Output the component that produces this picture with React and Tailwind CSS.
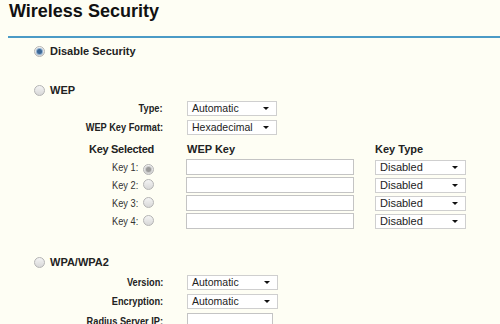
import React from "react";

function Radio({ checked, disabled }) {
  return (
    <span className="relative inline-flex w-[11px] h-[11px] rounded-full border border-[#b4b4b4] bg-gradient-to-b from-[#f4f4f4] to-[#d8d8d8] items-center justify-center shrink-0">
      {checked && (
        <span
          className={
            disabled
              ? "w-[5px] h-[5px] rounded-full bg-[#9a9a9a] ring-1 ring-[#c8c8c8]"
              : "w-[5px] h-[5px] rounded-full bg-[#3c6796] ring-1 ring-[#8fb0d0]"
          }
        />
      )}
    </span>
  );
}

function Select({ value, width = "w-[90px]", textSize = "text-[10.5px]" }) {
  return (
    <div
      className={`${width} h-[15px] border border-[#cfcfcf] bg-white flex items-center justify-between pl-[4px] pr-[7px] ${textSize} text-[#222] leading-none`}
    >
      <span>{value}</span>
      <span className="w-0 h-0 border-l-[3px] border-r-[3px] border-t-[3px] border-l-transparent border-r-transparent border-t-[#111]" />
    </div>
  );
}

function Input({ width }) {
  return <div className={`${width} h-[16px] border border-[#c4c4c4] bg-white`} />;
}

function LabelRow({ label, children, className = "" }) {
  return (
    <div className={`flex items-center ${className}`}>
      <div className="w-[163px] flex justify-end font-bold text-[11px] text-[#222] leading-none">
        <span className="inline-block whitespace-nowrap origin-right scale-x-[0.84]">{label}</span>
      </div>
      <div className="ml-[24px]">{children}</div>
    </div>
  );
}

export default function App() {
  return (
    <div
      className="w-[500px] h-[324px] overflow-hidden bg-[#fefef4] text-[#222]"
      style={{ fontFamily: "'Liberation Sans', Arial, sans-serif" }}
    >
      <div className="flex flex-col">
        <div className="pl-[9px] text-[18px] font-bold leading-[22px] text-[#111]">Wireless Security</div>
        <div className="ml-[8px] mt-[14px] h-[2px] bg-[#4b9bc6]" />

        <div className="flex items-center h-[14px] mt-[6px] pl-[34px]">
          <Radio checked />
          <span className="ml-[5px] text-[11px] font-bold leading-none">Disable Security</span>
        </div>

        <div className="flex items-center h-[14px] mt-[25px] pl-[34px]">
          <Radio />
          <span className="ml-[5px] text-[11px] font-bold leading-none">WEP</span>
        </div>

        <LabelRow label="Type:" className="mt-[4px]">
          <Select value="Automatic" />
        </LabelRow>
        <LabelRow label="WEP Key Format:" className="mt-[4px]">
          <Select value="Hexadecimal" />
        </LabelRow>

        <div className="flex items-center h-[14px] mt-[7px] text-[11px] font-bold leading-none">
          <div className="w-[163px] pl-[89px] tracking-[-0.3px]">Key Selected</div>
          <div className="ml-[24px] w-[188px]">WEP Key</div>
          <div>Key Type</div>
        </div>

        <div className="flex flex-col gap-[2px] mt-[3px]">
          {[1, 2, 3, 4].map((n) => (
            <div key={n} className="flex items-center h-[16px]">
              <div className="w-[154px] flex items-center justify-end">
                <span className="inline-block whitespace-nowrap origin-right scale-x-[0.84] text-[11px] leading-none text-[#333]">
                  Key {n}:
                </span>
                <span className="ml-[5px]">
                  <Radio checked={n === 1} disabled />
                </span>
              </div>
              <div className="ml-[32px]">
                <Input width="w-[168px]" />
              </div>
              <div className="ml-[21px]">
                <Select value="Disabled" width="w-[91px]" textSize="text-[11px]" />
              </div>
            </div>
          ))}
        </div>

        <div className="flex items-center h-[14px] mt-[26px] pl-[34px]">
          <Radio />
          <span className="ml-[5px] text-[11px] font-bold leading-none">WPA/WPA2</span>
        </div>

        <LabelRow label="Version:" className="mt-[6px]">
          <Select value="Automatic" width="w-[91px]" />
        </LabelRow>
        <LabelRow label="Encryption:" className="mt-[4px]">
          <Select value="Automatic" width="w-[91px]" />
        </LabelRow>
        <LabelRow label="Radius Server IP:" className="mt-[4px]">
          <Input width="w-[86px]" />
        </LabelRow>
      </div>
    </div>
  );
}
